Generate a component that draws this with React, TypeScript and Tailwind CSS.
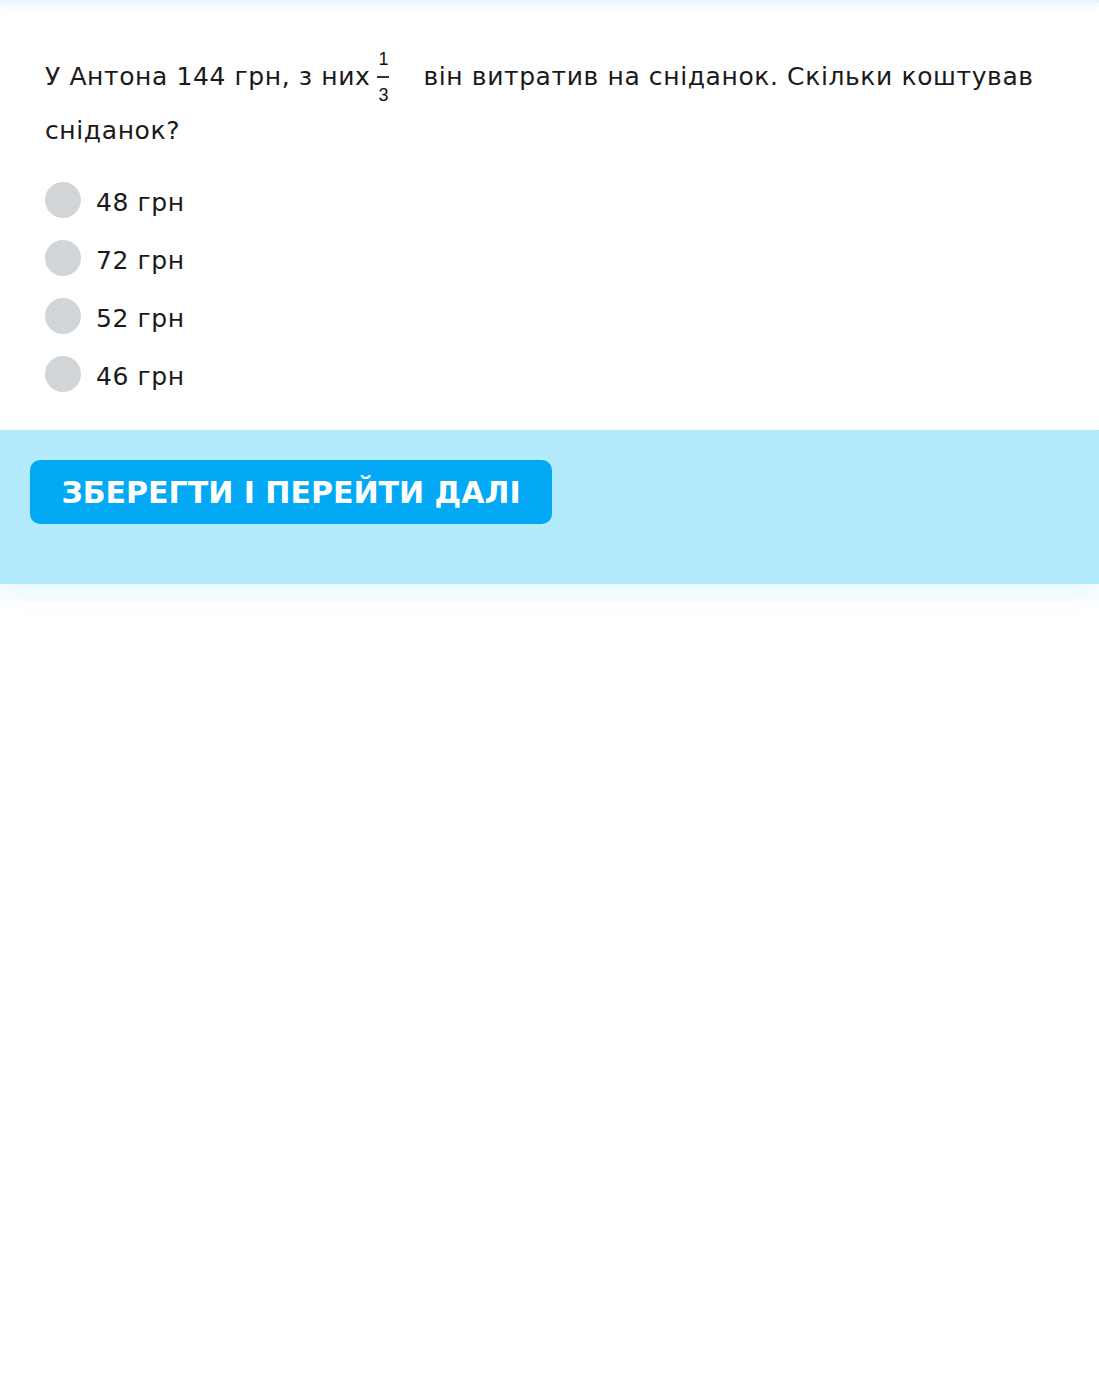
import React, { useState } from 'react';

const options = ['48 грн', '72 грн', '52 грн', '46 грн'];

function Fraction() {
  return (
    <span className="inline-flex flex-col items-center align-[20px] ml-[7px] mr-[34px] -my-[24px] font-['Liberation_Sans',sans-serif] text-[18px] leading-[18px] tracking-normal text-[#111]">
      <span>1</span>
      <span className="w-[12px] h-[1.5px] bg-[#333] my-[8px]" />
      <span>3</span>
    </span>
  );
}

export default function App() {
  const [selected, setSelected] = useState<number | null>(null);

  return (
    <div className="min-h-[1382px] bg-white font-['DejaVu_Sans',sans-serif] text-[#1a1a1a]">
      {/* top strip */}
      <div className="h-[3px] bg-[#e6f6fd] shadow-[0_2px_6px_rgba(180,230,250,0.5)]" />

      <div className="px-[45px] pt-[47px] pb-[38px]">
        <p className="text-[25px] leading-[54px] tracking-[0.6px]">
          У Антона 144 грн, з них
          <Fraction />
          він витратив на сніданок. Скільки коштував сніданок?
        </p>

        <div className="mt-[24px] flex flex-col gap-[22px]">
          {options.map((opt, i) => (
            <label
              key={opt}
              onClick={() => setSelected(i)}
              className="flex items-start h-[36px] gap-[15px] cursor-pointer"
            >
              <span
                className={`w-[36px] h-[36px] shrink-0 rounded-full ${
                  selected === i ? 'bg-[#03a9f4]' : 'bg-[#d1d5d8]'
                }`}
              />
              <span className="text-[25px] leading-[42px] tracking-[0.6px]">{opt}</span>
            </label>
          ))}
        </div>
      </div>

      {/* footer actions */}
      <div className="h-[154px] bg-[#b3ebfc] px-[30px] pt-[30px] shadow-[0_10px_20px_rgba(179,235,252,0.35)]">
        <button className="h-[64px] w-[522px] rounded-[10px] bg-[#03a9f4] text-white text-[30px] font-bold uppercase">
          Зберегти і перейти далі
        </button>
      </div>
    </div>
  );
}
